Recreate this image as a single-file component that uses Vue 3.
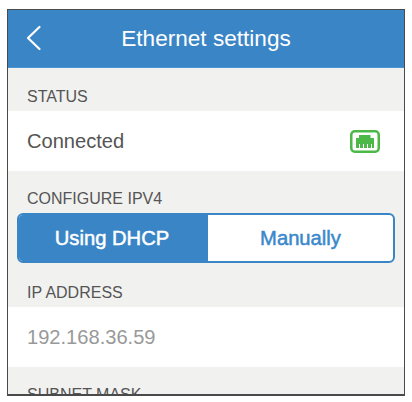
<template>
  <div class="page">
    <div class="phone">
      <header class="topbar">
        <svg class="back" width="18" height="26" viewBox="0 0 18 26">
          <path d="M14.5 2 L3 13 L14.5 24" fill="none" stroke="#fff" stroke-width="2.2" stroke-linecap="round" stroke-linejoin="round" />
        </svg>
        <h1 class="title">Ethernet settings</h1>
      </header>

      <div class="label label-first">STATUS</div>
      <div class="row">
        <span>Connected</span>
        <svg class="port" width="30" height="23" viewBox="0 0 30 23">
          <rect x="1.25" y="1.25" width="27.5" height="20.5" rx="3.5" fill="#fff" stroke="#4cb848" stroke-width="2.5" />
          <path d="M9 5 H20.5 V8 H24 V18 H22 V14 H21 V18 H18 V14 H17 V18 H14 V14 H13 V18 H10 V14 H9 V18 H6 V8 H9 Z" fill="#4cb848" />
        </svg>
      </div>

      <div class="label label-config">CONFIGURE IPV4</div>
      <div class="segments">
        <div class="segment active">Using DHCP</div>
        <div class="segment">Manually</div>
      </div>

      <div class="label label-ip">IP ADDRESS</div>
      <div class="row row-muted">192.168.36.59</div>

      <div class="label">SUBNET MASK</div>
    </div>
  </div>
</template>

<script setup>
</script>

<style>
html, body {
  margin: 0;
  background: #fff;
}
</style>

<style scoped>
.page {
  width: 412px;
  height: 402px;
  padding: 9px 0 0 7px;
  box-sizing: border-box;
  overflow: hidden;
  font-family: "Liberation Sans", Arial, sans-serif;
}
.phone {
  width: 398px;
  height: 387px;
  box-sizing: border-box;
  border-style: solid;
  border-color: #4a4a4a;
  border-width: 1px 1px 2px 1px;
  overflow: hidden;
  background: #f1f1f0;
}
.topbar {
  height: 58px;
  display: flex;
  align-items: center;
  justify-content: center;
  position: relative;
  background: #3a85c6;
  border-bottom: 1px solid #4a94d2;
  box-sizing: border-box;
}
.back {
  position: absolute;
  left: 17px;
  top: 15px;
}
.title {
  margin: 0;
  font-size: 22.6px;
  font-weight: 400;
  color: #fff;
}
.label {
  height: 43px;
  padding: 18px 0 0 19px;
  box-sizing: border-box;
  font-size: 16px;
  line-height: 19px;
  color: #555;
}
.label-first {
  padding-top: 19px;
}
.label-config {
  height: 42px;
}
.label-ip {
  height: 44px;
  padding-top: 20px;
}
.row {
  height: 60px;
  padding: 0 24px 0 19px;
  display: flex;
  align-items: center;
  justify-content: space-between;
  background: #fff;
  font-size: 20.1px;
  color: #555;
}
.row-muted {
  color: #999;
}
.segments {
  display: flex;
  height: 50px;
  margin: 0 9px;
  box-sizing: border-box;
  border: 2px solid #3a85c6;
  border-radius: 6px;
  overflow: hidden;
  background: #fff;
}
.segment {
  flex: 1;
  display: flex;
  align-items: center;
  justify-content: center;
  font-size: 20.2px;
  -webkit-text-stroke: 0.5px currentColor;
  color: #3a88cc;
}
.segment.active {
  flex: 0 0 189px;
  padding-right: 3px;
  box-sizing: border-box;
  background: #3a85c6;
  color: #fff;
}
</style>
